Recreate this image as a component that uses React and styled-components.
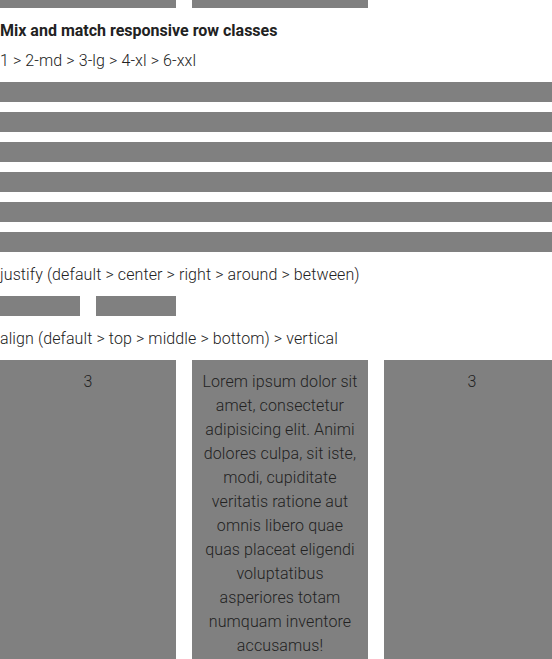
import React from 'react';
import styled, { createGlobalStyle } from 'styled-components';

const GlobalStyle = createGlobalStyle`
    html, body {
        margin: 0;
        padding: 0;
        background: #ffffff;
        overflow: hidden;
    }
    body {
        font-family: Roboto, "Liberation Sans", Arial, sans-serif;
        font-weight: 300;
        font-size: 16px;
        line-height: 24px;
        letter-spacing: 0.1px;
        color: #222222;
    }
`;

const lorem = 'Lorem ipsum dolor sit amet, consectetur adipisicing elit. Animi dolores culpa, sit iste, modi, cupiditate veritatis ratione aut omnis libero quae quas placeat eligendi voluptatibus asperiores totam numquam inventore accusamus!';

export default function App() {
    return (
        <Page>
            <GlobalStyle />
            <Row $cols={3} $height={8}>
                <Cell />
                <Cell />
            </Row>
            <Title>Mix and match responsive row classes</Title>
            <Caption>1 &gt; 2-md &gt; 3-lg &gt; 4-xl &gt; 6-xxl</Caption>
            {[0, 1, 2, 3, 4, 5].map((i) => (
                <Row key={i} $cols={1} $height={20}>
                    <Cell />
                </Row>
            ))}
            <Caption>justify (default &gt; center &gt; right &gt; around &gt; between)</Caption>
            <Row $cols={6} $height={20}>
                <Cell />
                <Cell />
            </Row>
            <Caption>align (default &gt; top &gt; middle &gt; bottom) &gt; vertical</Caption>
            <Columns>
                <Column>3</Column>
                <Column>{lorem}</Column>
                <Column>3</Column>
            </Columns>
        </Page>
    );
}

const Page = styled.div`
    width: 560px;
    display: flex;
    flex-direction: column;
    gap: 10px;
`;
const Row = styled.div`
    display: grid;
    grid-template-columns: repeat(${(p) => p.$cols}, 1fr);
    column-gap: 16px;
    height: ${(p) => p.$height}px;
`;
const Cell = styled.div`
    background-color: #808080;
`;
const Title = styled.h4`
    margin: 0 0 -5px 0;
    padding-top: 1px;
    font-size: 16px;
    font-weight: 700;
    line-height: 24px;
    letter-spacing: 0;
    color: #222222;
`;
const Caption = styled.p`
    margin: 0 0 -1px 0;
    padding-top: 1px;
`;
const Columns = styled.div`
    display: grid;
    grid-template-columns: repeat(3, 1fr);
    column-gap: 16px;
`;
const Column = styled.div`
    background-color: #808080;
    padding: 10px 8px 20px;
    text-align: center;
    color: #222222;
`;
